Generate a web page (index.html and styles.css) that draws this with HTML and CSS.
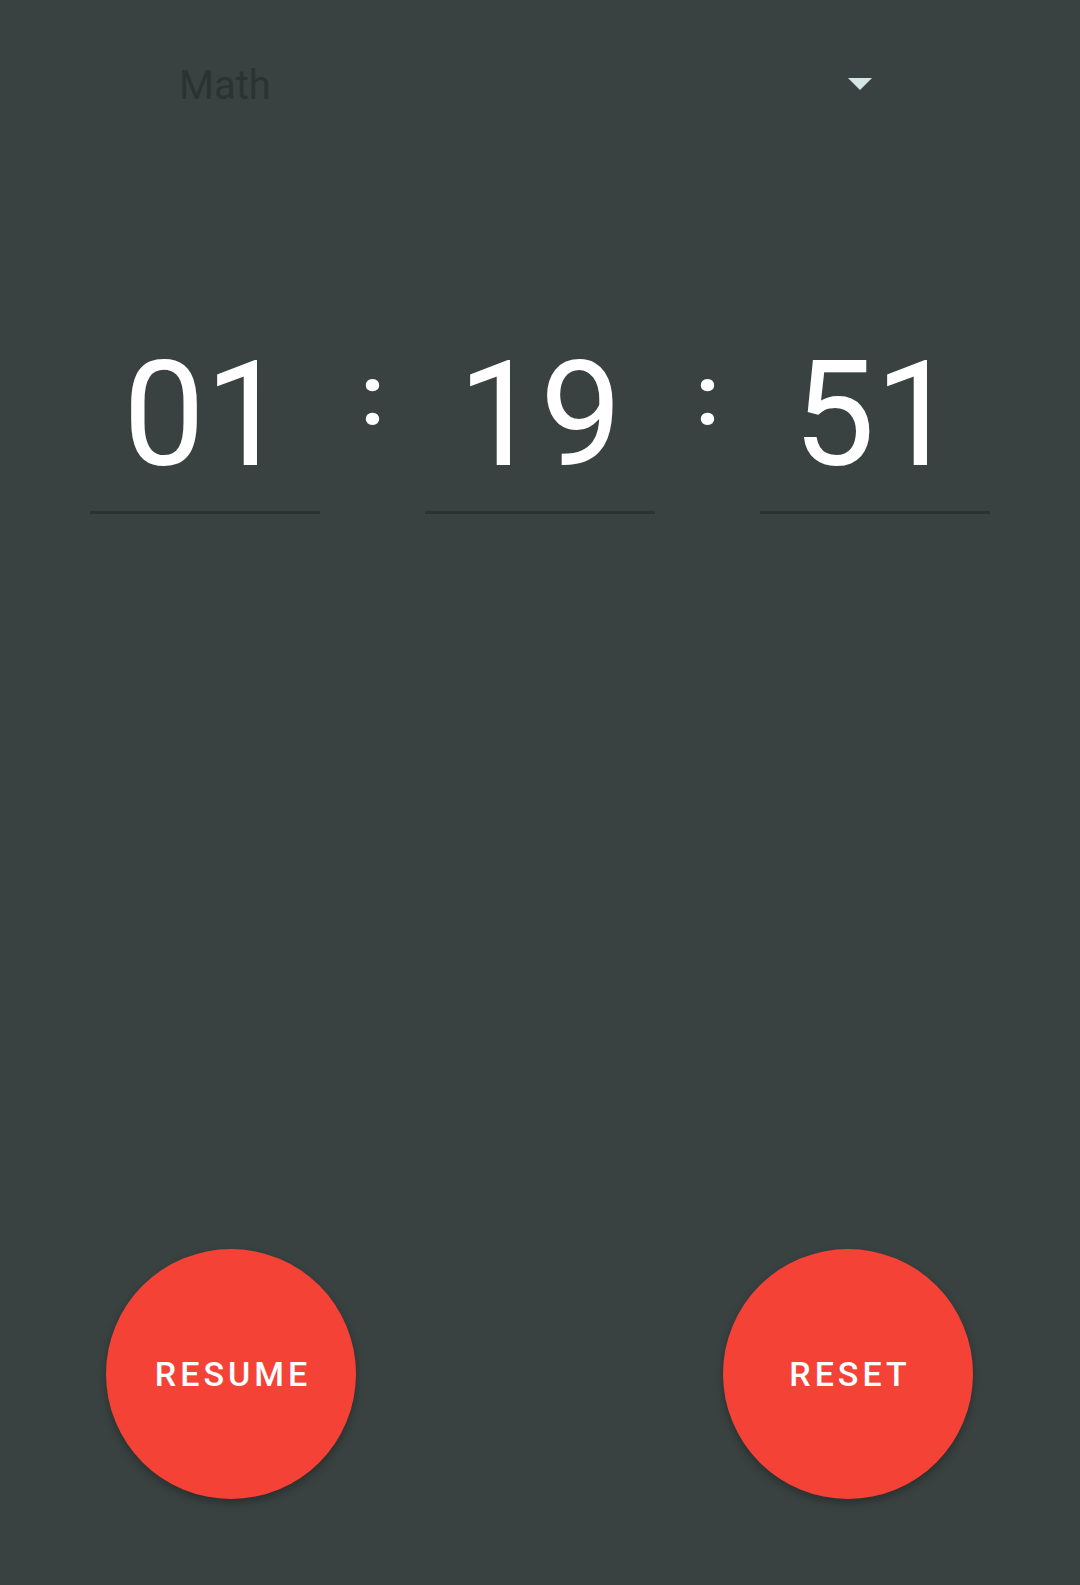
FILE: index.html
```html
<!DOCTYPE html>
<html lang="en">
<head>
<meta charset="utf-8">
<title>Timer</title>
<link rel="stylesheet" href="styles.css">
</head>
<body>
<div class="screen">
  <div class="spinner">
    <span class="spinner-label">Math</span>
    <svg class="spinner-arrow" width="24" height="12" viewBox="0 0 24 12"><path d="M0 0 L24 0 L12 12 Z" fill="#d3e6e3"/></svg>
  </div>

  <div class="timer">
    <div class="field"><span class="digits">01</span></div>
    <div class="sep"><span class="colon">:</span></div>
    <div class="field"><span class="digits">19</span></div>
    <div class="sep"><span class="colon">:</span></div>
    <div class="field"><span class="digits">51</span></div>
  </div>

  <div class="actions">
    <button class="fab">RESUME</button>
    <button class="fab">RESET</button>
  </div>
</div>
</body>
</html>
```

FILE: styles.css
```css
html, body {
  margin: 0;
  padding: 0;
  background: #394240;
}

.screen {
  width: 1080px;
  height: 1585px;
  display: flex;
  flex-direction: column;
  font-family: Roboto, "Noto Sans", sans-serif;
}

.spinner {
  display: flex;
  align-items: center;
  justify-content: space-between;
  margin-top: 63px;
  height: 46px;
  padding: 0 208px 0 179px;
}

.spinner-label {
  font-size: 40px;
  line-height: 46px;
  color: #2b3331;
}

.spinner-arrow {
  display: block;
  margin-top: -4px;
}

.timer {
  display: flex;
  justify-content: center;
  margin-top: 217px;
}

.field {
  width: 230px;
  display: flex;
  justify-content: center;
  padding-bottom: 5px;
  border-bottom: 3px solid #2b3331;
}

.digits {
  font-size: 146px;
  font-weight: 400;
  line-height: 180px;
  color: #ffffff;
}

.sep {
  width: 105px;
  display: flex;
  justify-content: center;
  align-items: flex-start;
}

.colon {
  margin-top: 21px;
  font-size: 84px;
  font-weight: 700;
  line-height: 100px;
  color: #ffffff;
}

.actions {
  display: flex;
  justify-content: space-between;
  padding: 0 107px 0 106px;
  margin-top: 735px;
}

.fab {
  width: 250px;
  height: 250px;
  border: none;
  border-radius: 50%;
  background: #f44336;
  color: #ffffff;
  font-family: Roboto, "Noto Sans", sans-serif;
  font-weight: 500;
  font-size: 34px;
  letter-spacing: 4px;
  padding: 0 0 0 4px;
  box-shadow: 0 4px 8px rgba(0, 0, 0, 0.28);
}
```
